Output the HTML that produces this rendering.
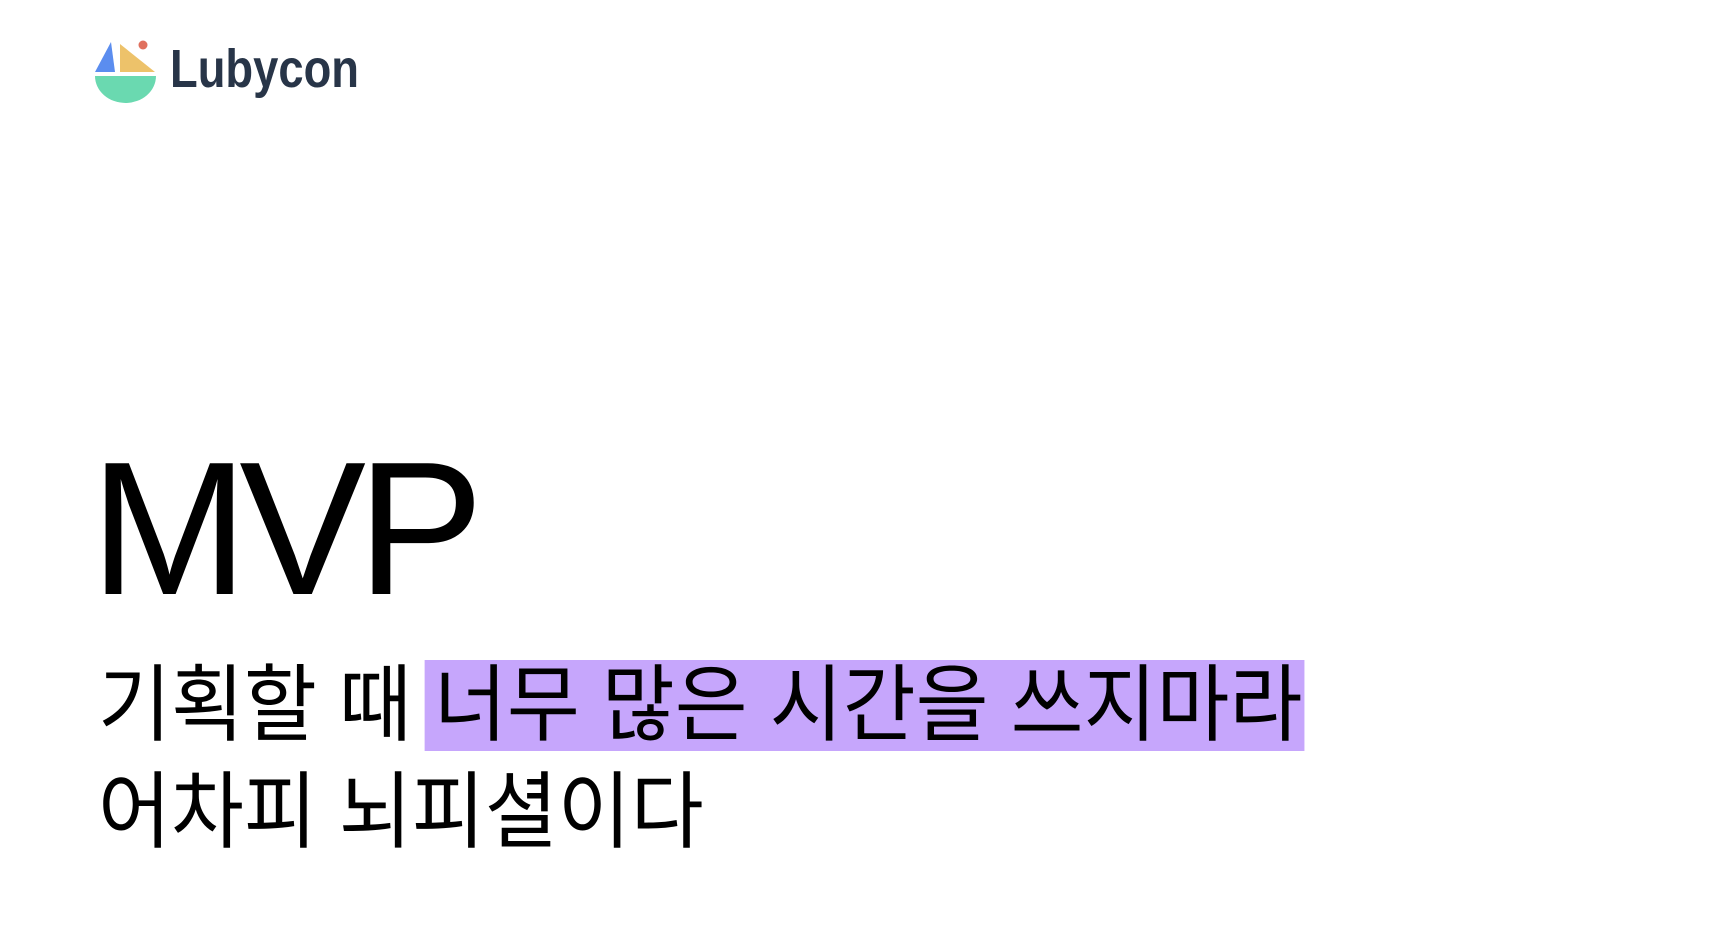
<!DOCTYPE html>
<html><head><meta charset="utf-8"><style>
html,body{margin:0;padding:0;background:#fff;width:1724px;height:946px;overflow:hidden;position:relative}
.logo{position:absolute;left:95px;top:40px}
.lt{position:absolute;left:170px;top:42px;font:bold 54px/1 "Liberation Sans",sans-serif;color:#283548;transform:scaleX(0.84);transform-origin:left}
.mvp{position:absolute;left:90px;top:434px;font:190px/1 "Liberation Sans",sans-serif;color:#000;letter-spacing:-9px}
.ko{position:absolute;left:98px;font:84px/91px "Liberation Sans","Noto Sans CJK KR",sans-serif;color:#000;white-space:nowrap;transform:scaleX(0.944);transform-origin:left}
.hl{background:#c6a6fc;display:inline-block;padding:0 2px 0 10px;margin-left:-10px}
</style></head><body>
<svg class="logo" width="62" height="64" viewBox="0 0 62 64">
<polygon points="16,2 0,32 20,32" fill="#5b8def"/>
<polygon points="25,4 25,32 60,32" fill="#edc26a"/>
<circle cx="48" cy="5" r="4.5" fill="#e0705e"/>
<path d="M0,36 H61 A30.5,27 0 0 1 0,36 Z" fill="#6ad9b0"/>
</svg>
<div class="lt">Lubycon</div>
<div class="mvp">MVP</div>
<div class="ko" style="top:660px">기획할 때 <span class="hl">너무 많은 시간을 쓰지마라</span></div>
<div class="ko" style="top:767px">어차피 뇌피셜이다</div>
</body></html>
